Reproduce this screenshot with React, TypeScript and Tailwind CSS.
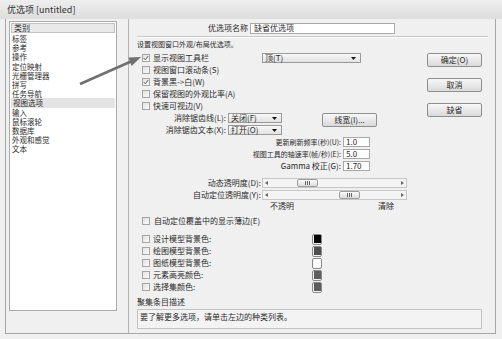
import React from 'react';

const categories = [
  '标签',
  '参考',
  '操作',
  '定位映射',
  '光栅管理器',
  '拼写',
  '任务导航',
  '视图选项',
  '输入',
  '鼠标滚轮',
  '数据库',
  '外观和感觉',
  '文本',
];

const colorRows = [
  { label: '设计模型背景色:', color: 'bg-[#050505]' },
  { label: '绘图模型背景色:', color: 'bg-[#505050]' },
  { label: '图纸模型背景色:', color: 'bg-white' },
  { label: '元素高亮颜色:', color: 'bg-[#5e5e5e]' },
  { label: '选择集颜色:', color: 'bg-[#5e5e5e]' },
];

function Check({ on = false }: { on?: boolean }) {
  return (
    <span className="flex h-[8px] w-[8px] shrink-0 items-center justify-center border border-[#a5a5a5] bg-gradient-to-br from-[#e0e0e0] to-[#fbfbfb]">
      {on && (
        <svg width="6" height="6" viewBox="0 0 6 6">
          <path d="M0.8 3.1 L2.3 4.7 L5.2 1" fill="none" stroke="#555" strokeWidth="1" />
        </svg>
      )}
    </span>
  );
}

function Combo({ value, className }: { value: string; className: string }) {
  return (
    <div
      className={`flex h-[10px] items-center justify-between border border-[#9a9a9a] bg-gradient-to-b from-[#f8f8f8] to-[#e2e2e2] pl-[2px] pr-[4px] ${className}`}
    >
      <span>{value}</span>
      <svg width="5" height="3" viewBox="0 0 5 3">
        <path d="M0 0h5L2.5 3z" fill="#111" />
      </svg>
    </div>
  );
}

function Field({ value }: { value: string }) {
  return (
    <div className="ml-[2px] flex h-[10px] w-[27px] items-center border border-[#a8a8a8] bg-white pl-[2px]">
      {value}
    </div>
  );
}

function Track({ offset }: { offset: string }) {
  return (
    <div className="flex h-[10px] w-[145px] items-center border border-[#c6c6c6] bg-[#f4f4f4] px-[2px]">
      <svg width="3" height="4" viewBox="0 0 3 4">
        <path d="M3 0v4L0 2z" fill="#666" />
      </svg>
      <div
        className={`flex h-[8px] w-[21px] items-center justify-center rounded-[2px] border border-[#9d9d9d] bg-gradient-to-b from-[#fbfbfb] to-[#dcdcdc] ${offset}`}
      >
        <svg width="5" height="4" viewBox="0 0 5 4">
          <path d="M0.5 0v4M2.5 0v4M4.5 0v4" stroke="#666" strokeWidth="1" />
        </svg>
      </div>
      <svg className="ml-auto" width="3" height="4" viewBox="0 0 3 4">
        <path d="M0 0v4L3 2z" fill="#666" />
      </svg>
    </div>
  );
}

function Btn({ children, className = '' }: { children: React.ReactNode; className?: string }) {
  return (
    <div
      className={`flex h-[14px] w-[55px] items-center justify-center rounded-[2px] border border-[#8f8f8f] bg-gradient-to-b from-[#f8f8f8] to-[#dadada] ${className}`}
    >
      {children}
    </div>
  );
}

function CheckRow({ label, on = false, children }: { label: string; on?: boolean; children?: React.ReactNode }) {
  return (
    <div className="flex h-[12px] items-center pl-[5px]">
      <Check on={on} />
      <span className="ml-[3px] w-[109px] whitespace-nowrap">{label}</span>
      {children}
    </div>
  );
}

export default function App() {
  return (
    <div className="relative h-[339px] w-[502px] overflow-hidden bg-[#f0f0f0] text-[8px] leading-none text-[#2a2a2a] [font-family:'Noto_Sans_CJK_SC','Liberation_Sans',sans-serif]">
      {/* title bar */}
      <div className="flex h-[19px] items-center bg-gradient-to-b from-[#eeeeee] to-[#dddddd] pl-[7px] text-[9px] text-[#333]">
        优选项 [untitled]
      </div>

      {/* window frame */}
      <div className="ml-[5px] flex h-[315px] w-[491px] border-x border-b border-[#a6a6a6] bg-[#f0f0f0]">
        {/* category list */}
        <div className="w-[122px] shrink-0 pl-[3px] pt-[2px]">
          <div className="h-[290px] w-[108px] border border-[#aaa] bg-white">
            <div className="mx-[1px] mt-[1px] flex h-[10px] items-center border border-[#c2c2c2] bg-[#e9e9e9] pl-[2px]">
              类别
            </div>
            <div className="mt-[1px] text-[7.5px]">
              {categories.map((c) => (
                <div
                  key={c}
                  className={`flex h-[9.2px] items-center pl-[2px] leading-[7px] ${c === '视图选项' ? 'mx-[1px] bg-[#e4e4e4]' : ''}`}
                >
                  {c}
                </div>
              ))}
            </div>
          </div>
        </div>

        {/* options panel */}
        <div className="flex-1 border-l border-[#b4b4b4] pl-[8px]">
          <div className="mt-[4px] flex h-[10px] items-center">
            <span className="w-[111px] text-right">优选项名称</span>
            <div className="ml-[2px] flex h-[11px] w-[145px] items-center border border-[#aaa] bg-white pl-[3px]">
              缺省优选项
            </div>
          </div>
          <div className="mt-[3px] w-[351px] border-t border-b border-t-[#c8c8c8] border-b-white" />
          <div className="mt-[1px] flex h-[10px] items-center text-[7px]">设置视图窗口外观/布局优选项。</div>

          <div className="flex">
            <div className="w-[290px]">
              <div className="mt-[3px]">
                <CheckRow label="显示视图工具栏" on>
                  <Combo value="顶(T)" className="w-[99px]" />
                </CheckRow>
                <CheckRow label="视图窗口滚动条(S)" />
                <CheckRow label="背景黑->白(W)" on />
                <CheckRow label="保留视图的外观比率(A)" />
                <CheckRow label="快速可视边(V)" />
              </div>

              <div className="flex h-[12px] items-center">
                <span className="w-[89px] text-right">消除锯齿线(L):</span>
                <Combo value="关闭(F)" className="ml-[2px] w-[54px]" />
                <Btn className="ml-[40px] mt-[4px] h-[11px] w-[36px]">线宽(I)...</Btn>
              </div>
              <div className="flex h-[12px] items-center">
                <span className="w-[89px] text-right">消除锯齿文本(X):</span>
                <Combo value="打开(O)" className="ml-[2px] w-[54px]" />
              </div>

              <div className="flex h-[12px] items-center">
                <span className="w-[204px] text-right text-[7px]">更新刷新频率(秒)(U):</span>
                <Field value="1.0" />
              </div>
              <div className="flex h-[12px] items-center">
                <span className="w-[204px] text-right text-[7px]">视图工具的轴速率(帧/秒)(E):</span>
                <Field value="5.0" />
              </div>
              <div className="flex h-[12px] items-center">
                <span className="w-[204px] text-right">Gamma 校正(G):</span>
                <Field value="1.70" />
              </div>

              <div className="mt-[5px] flex h-[12px] items-center">
                <span className="w-[124px] text-right">动态透明度(D):</span>
                <div className="ml-[1px]">
                  <Track offset="ml-[29px]" />
                </div>
              </div>
              <div className="flex h-[12px] items-center">
                <span className="w-[124px] text-right">自动定位透明度(Y):</span>
                <div className="ml-[1px]">
                  <Track offset="ml-[71px]" />
                </div>
              </div>
              <div className="flex h-[10px] items-center pl-[133px]">
                <span>不透明</span>
                <span className="ml-[84px]">清除</span>
              </div>

              <div className="mt-[4px] flex h-[12px] items-center pl-[5px]">
                <Check />
                <span className="ml-[4px]">自动定位覆盖中的显示薄边(E)</span>
              </div>

              <div className="mt-[6px]">
                {colorRows.map((r) => (
                  <div key={r.label} className="flex h-[12px] items-center pl-[5px]">
                    <Check />
                    <span className="ml-[3px] w-[159px]">{r.label}</span>
                    <div className="flex h-[11px] w-[10px] items-center justify-center rounded-[2px] border border-[#8a8a8a] bg-[#f4f4f4]">
                      <div className={`h-[8px] w-[7px] ${r.color}`} />
                    </div>
                  </div>
                ))}
              </div>
            </div>

            <div className="mt-[4px] flex flex-col gap-[11px]">
              <Btn>确定(O)</Btn>
              <Btn>取消</Btn>
              <Btn>缺省</Btn>
            </div>
          </div>

          <div className="mt-[4px] flex h-[10px] items-center">聚集条目描述</div>
          <div className="mt-[2px] flex h-[20px] w-[345px] items-start border border-[#c2c2c2] bg-[#f3f3f3] pl-[2px] pt-[3px]">
            要了解更多选项，请单击左边的种类列表。
          </div>
        </div>
      </div>

      {/* annotation arrow */}
      <svg className="pointer-events-none absolute left-0 top-0" width="502" height="339" viewBox="0 0 502 339">
        <line x1="80" y1="84" x2="131" y2="61.5" stroke="#707070" strokeWidth="2.5" />
        <polygon points="141,57 131.6,66 128.4,57.5" fill="#707070" />
      </svg>
    </div>
  );
}
